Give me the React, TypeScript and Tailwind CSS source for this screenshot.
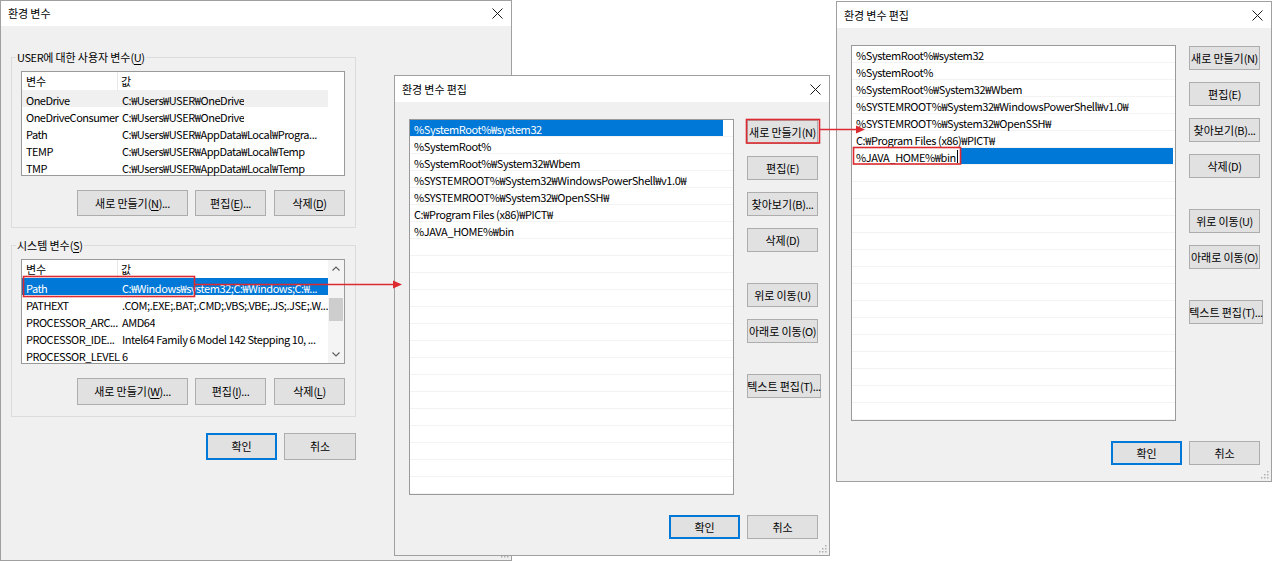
import React from "react"

const editRows = [
  "%SystemRoot%₩system32",
  "%SystemRoot%",
  "%SystemRoot%₩System32₩Wbem",
  "%SYSTEMROOT%₩System32₩WindowsPowerShell₩v1.0₩",
  "%SYSTEMROOT%₩System32₩OpenSSH₩",
  "C:₩Program Files (x86)₩PICT₩",
  "%JAVA_HOME%₩bin",
]

const userVars = [
  ["OneDrive", "C:₩Users₩USER₩OneDrive"],
  ["OneDriveConsumer", "C:₩Users₩USER₩OneDrive"],
  ["Path", "C:₩Users₩USER₩AppData₩Local₩Progra..."],
  ["TEMP", "C:₩Users₩USER₩AppData₩Local₩Temp"],
  ["TMP", "C:₩Users₩USER₩AppData₩Local₩Temp"],
]

const sysVars = [
  ["Path", "C:₩Windows₩system32;C:₩Windows;C:₩..."],
  ["PATHEXT", ".COM;.EXE;.BAT;.CMD;.VBS;.VBE;.JS;.JSE;.W..."],
  ["PROCESSOR_ARC...", "AMD64"],
  ["PROCESSOR_IDE...", "Intel64 Family 6 Model 142 Stepping 10, ..."],
  ["PROCESSOR_LEVEL", "6"],
]

function ko(s: string) {
  return s.split(/([\uAC00-\uD7A3]+)/).map((part, i) =>
    /[\uAC00-\uD7A3]/.test(part) ? (
      <span key={i} className="text-[11px] tracking-normal">
        {part}
      </span>
    ) : (
      part
    )
  )
}

function CloseX() {
  return (
    <svg width="11" height="11" viewBox="0 0 11 11" className="shrink-0">
      <path d="M0.5 0.5 L10.5 10.5 M10.5 0.5 L0.5 10.5" stroke="#1a1a1a" strokeWidth="1" fill="none" />
    </svg>
  )
}

function Grip() {
  const dots = [[8, 2], [8, 5], [5, 5], [8, 8], [5, 8], [2, 8]]
  return (
    <svg width="11" height="11" viewBox="0 0 11 11" className="absolute right-[1px] bottom-[1px]">
      {dots.map(([x, y], i) => (
        <rect key={i} x={x} y={y} width="1.5" height="1.5" fill="#b0b0b0" />
      ))}
    </svg>
  )
}

function U({ children }: { children: React.ReactNode }) {
  return <span className="underline underline-offset-2">{children}</span>
}

function Btn({ children, className = "", primary = false }: { children: React.ReactNode; className?: string; primary?: boolean }) {
  return (
    <div
      className={`shrink-0 flex items-center justify-center whitespace-nowrap bg-[#e1e1e1] leading-none ${
        primary ? "border-2 border-[#0078d7]" : "border border-[#adadad]"
      } ${className}`}
    >
      <span>{typeof children === "string" ? ko(children) : children}</span>
    </div>
  )
}

function ListHeader() {
  return (
    <div className="flex h-[18px] shrink-0">
      <div className="w-[96px] flex items-center pl-[4px] border-r border-[#e8e8e8]">{ko("변수")}</div>
      <div className="flex items-center pl-[3px]">{ko("값")}</div>
    </div>
  )
}

function VarRow({ name, value, cls }: { name: string; value: string; cls: string }) {
  return (
    <div className={`flex h-[17px] shrink-0 items-center pt-[3px] ${cls}`}>
      <div className="w-[96px] shrink-0 pl-[4px] whitespace-nowrap tracking-[-0.5px]">{name}</div>
      <div className="pl-[4px] whitespace-nowrap overflow-hidden tracking-[-0.45px]">{value}</div>
    </div>
  )
}

function UserList() {
  return (
    <div className="ml-[9px] mt-[5px] w-[324px] h-[105px] shrink-0 border border-[#9a9a9a] bg-white flex flex-col">
      <ListHeader />
      {userVars.map(([n, v], i) => (
        <VarRow key={n} name={n} value={v} cls={`w-[306px] ${i === 0 ? "bg-[#f0f0f0]" : ""}`} />
      ))}
    </div>
  )
}

function Chevron({ up }: { up: boolean }) {
  return (
    <svg width="8" height="5" viewBox="0 0 8 5">
      <path d={up ? "M0.5 4.5 L4 1 L7.5 4.5" : "M0.5 0.5 L4 4 L7.5 0.5"} stroke="#606060" strokeWidth="1.2" fill="none" />
    </svg>
  )
}

function SysList() {
  return (
    <div className="ml-[9px] mt-[5px] w-[324px] h-[105px] shrink-0 border border-[#9a9a9a] bg-white flex">
      <div className="w-[306px] flex flex-col">
        <ListHeader />
        {sysVars.map(([n, v], i) => (
          <VarRow key={n} name={n} value={v} cls={i === 0 ? "bg-[#0078d7] text-white" : ""} />
        ))}
      </div>
      <div className="w-[16px] flex flex-col bg-[#f4f4f4]">
        <div className="h-[17px] flex items-center justify-center">
          <Chevron up />
        </div>
        <div className="flex-1">
          <div className="mt-[21px] mx-[1px] h-[23px] bg-[#cdcdcd]" />
        </div>
        <div className="h-[17px] flex items-center justify-center">
          <Chevron up={false} />
        </div>
      </div>
    </div>
  )
}

function EnvDialog() {
  return (
    <div className="absolute left-0 top-0 w-[512px] h-[561px] flex flex-col bg-[#f0f0f0] border border-[#a0a0a0]">
      <div className="h-[25px] shrink-0 bg-white flex items-center justify-between pl-[7px] pr-[8px]">
        <span>{ko("환경 변수")}</span>
        <CloseX />
      </div>
      <div className="flex flex-col pl-[10px]">
        <div className="mt-[31px] w-[345px] h-[171px] border border-[#dcdcdc] flex flex-col">
          <div className="-mt-[9px] ml-[4px] w-fit px-[1px] bg-[#f0f0f0] leading-[17px]">
            {ko("USER에 대한 사용자 변수(")}
            <U>U</U>)
          </div>
          <UserList />
          <div className="flex mt-[14px] ml-[65px]">
            <Btn className="w-[111px] h-[26px]">
              {ko("새로 만들기(")}
              <U>N</U>)...
            </Btn>
            <Btn className="ml-[7px] w-[71px] h-[26px]">
              {ko("편집(")}
              <U>E</U>)...
            </Btn>
            <Btn className="ml-[8px] w-[71px] h-[26px]">
              {ko("삭제(")}
              <U>D</U>)
            </Btn>
          </div>
        </div>
        <div className="mt-[17px] w-[345px] h-[172px] border border-[#dcdcdc] flex flex-col">
          <div className="-mt-[9px] ml-[4px] w-fit px-[1px] bg-[#f0f0f0] leading-[17px]">
            {ko("시스템 변수(")}
            <U>S</U>)
          </div>
          <SysList />
          <div className="flex mt-[14px] ml-[65px]">
            <Btn className="w-[111px] h-[27px]">
              {ko("새로 만들기(")}
              <U>W</U>)...
            </Btn>
            <Btn className="ml-[7px] w-[71px] h-[27px]">
              {ko("편집(")}
              <U>I</U>)...
            </Btn>
            <Btn className="ml-[8px] w-[71px] h-[27px]">
              {ko("삭제(")}
              <U>L</U>)
            </Btn>
          </div>
        </div>
        <div className="flex mt-[16px] ml-[195px]">
          <Btn primary className="w-[71px] h-[27px]">
            확인
          </Btn>
          <Btn className="ml-[7px] w-[72px] h-[27px]">취소</Btn>
        </div>
      </div>
      <Grip />
    </div>
  )
}

function EditDialog({ pos, mode }: { pos: string; mode: "first" | "edit" }) {
  return (
    <div className={`absolute ${pos} w-[436px] h-[481px] flex flex-col bg-[#f0f0f0] border border-[#a0a0a0]`}>
      <div className="h-[26px] shrink-0 bg-white flex items-center justify-between pl-[7px] pr-[8px]">
        <span>{ko("환경 변수 편집")}</span>
        <CloseX />
      </div>
      <div className="flex flex-col pl-[14px] pr-[10px] pt-[17px]">
        <div className="flex">
          <div className="w-[325px] h-[376px] shrink-0 border border-[#9a9a9a] bg-white flex flex-col overflow-hidden">
            {Array.from({ length: 22 }).map((_, i) => {
              const text = editRows[i]
              const sel = mode === "first" && i === 0
              const editing = mode === "edit" && i === 6
              return (
                <div key={i} className="h-[17px] shrink-0 flex border-b border-[#f3f3f3]">
                  {editing ? (
                    <>
                      <div className="ml-[1px] w-[108px] shrink-0 bg-white flex items-center pl-[3px] pt-[3px] whitespace-nowrap">
                        {text}
                        <span className="ml-[1px] -mt-[2px] w-px h-[13px] bg-black" />
                      </div>
                      <div className="w-[212px] bg-[#0078d7]" />
                    </>
                  ) : (
                    <div
                      className={`w-[313px] flex items-center pl-[4px] pt-[3px] whitespace-nowrap ${
                        sel ? "bg-[#0078d7] text-white" : ""
                      }`}
                    >
                      {text}
                    </div>
                  )}
                </div>
              )
            })}
          </div>
          <div className="ml-[13px] flex flex-col">
            <Btn className="mt-[1px] w-[71px] h-[24px]">새로 만들기(N)</Btn>
            <Btn className="mt-[12px] w-[71px] h-[24px]">편집(E)</Btn>
            <Btn className="mt-[12px] w-[71px] h-[24px]">찾아보기(B)...</Btn>
            <Btn className="mt-[12px] w-[71px] h-[24px]">삭제(D)</Btn>
            <Btn className="mt-[31px] w-[71px] h-[24px]">위로 이동(U)</Btn>
            <Btn className="mt-[12px] w-[71px] h-[24px]">아래로 이동(O)</Btn>
            <Btn className="mt-[31px] w-[74px] h-[24px]">텍스트 편집(T)...</Btn>
          </div>
        </div>
        <div className="flex justify-end mt-[20px] pr-[1px]">
          <Btn primary className="w-[71px] h-[24px]">
            확인
          </Btn>
          <Btn className="ml-[7px] w-[71px] h-[24px]">취소</Btn>
        </div>
      </div>
      <Grip />
    </div>
  )
}

function Annotations() {
  const red = "#dc2a30"
  return (
    <svg width="1280" height="561" viewBox="0 0 1280 561" className="absolute left-0 top-0 pointer-events-none">
      <rect x="23.5" y="276.5" width="171" height="20" fill="none" stroke={red} strokeWidth="1.6" />
      <line x1="195" y1="284.5" x2="394" y2="284.5" stroke={red} strokeWidth="1.4" />
      <polygon points="393,280.5 402,284.5 393,288.5" fill={red} />
      <rect x="746.5" y="119.5" width="73" height="23.5" fill="none" stroke={red} strokeWidth="1.6" />
      <line x1="820" y1="129.5" x2="857" y2="129.5" stroke={red} strokeWidth="1.4" />
      <polygon points="856,125.5 865,129.5 856,133.5" fill={red} />
      <rect x="853.5" y="147.5" width="107" height="16.5" fill="none" stroke={red} strokeWidth="1.6" />
    </svg>
  )
}

export default function App() {
  return (
    <div className="relative w-[1280px] h-[561px] overflow-hidden bg-white text-[11px] tracking-[-0.4px] text-black font-['Noto_Sans_CJK_KR',sans-serif]">
      <EnvDialog />
      <EditDialog pos="left-[394px] top-[75px]" mode="first" />
      <EditDialog pos="left-[836px] top-[1px]" mode="edit" />
      <Annotations />
    </div>
  )
}
